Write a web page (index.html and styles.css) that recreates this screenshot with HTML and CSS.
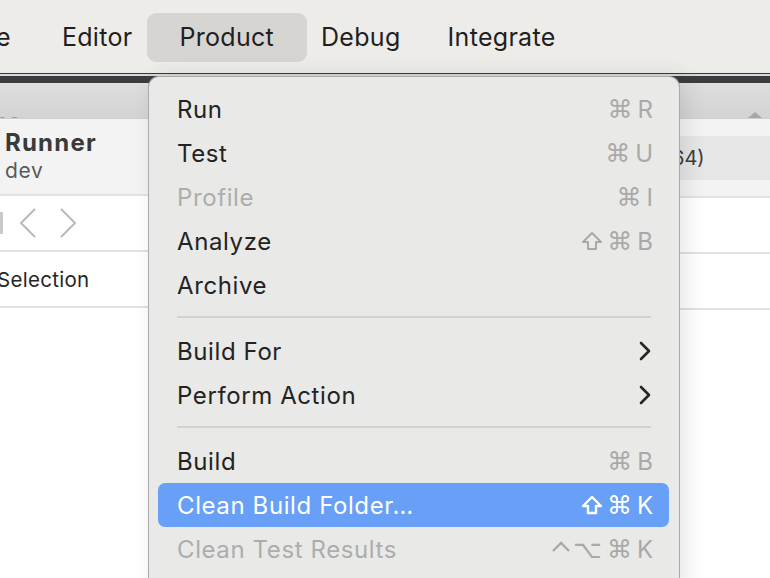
FILE: index.html
```html
<!DOCTYPE html>
<html>
<head>
<meta charset="utf-8">
<link rel="stylesheet" href="styles.css">
</head>
<body>
<div class="screen">
  <header class="menubar">
    <span class="mb-item mb-cut">e</span>
    <span class="mb-item">Editor</span>
    <span class="mb-item mb-active">Product</span>
    <span class="mb-item">Debug</span>
    <span class="mb-item">Integrate</span>
  </header>
  <div class="gap-line"></div>
  <div class="window">
    <div class="toolbar">
      <span class="tb-cut">no</span>
      <span class="tb-arrow"></span>
    </div>
    <div class="panes">
      <section class="left-pane">
        <div class="scheme">
          <div class="scheme-name">Runner</div>
          <div class="scheme-sub">dev</div>
        </div>
        <div class="nav-row">
          <span class="nav-bar"></span>
          <svg class="nav-chev" width="18" height="30" viewBox="0 0 18 30"><path d="M16 1 L2 15 L16 29" fill="none" stroke="#b9b9b9" stroke-width="2"/></svg>
          <svg class="nav-chev" width="18" height="30" viewBox="0 0 18 30"><path d="M2 1 L16 15 L2 29" fill="none" stroke="#b9b9b9" stroke-width="2"/></svg>
        </div>
        <div class="sel-row">Selection</div>
        <div class="blank"></div>
      </section>
      <section class="right-pane">
        <div class="dest-top"></div>
        <div class="dest">64)</div>
        <div class="dest-bot"></div>
        <div class="r-row"></div>
        <div class="r-row"></div>
        <div class="blank"></div>
      </section>
    </div>
  </div>

  <nav class="menu">
    <div class="mi"><span>Run</span><span class="sc"><span class="k">⌘</span>R</span></div>
    <div class="mi"><span>Test</span><span class="sc"><span class="k">⌘</span>U</span></div>
    <div class="mi dis"><span>Profile</span><span class="sc"><span class="k">⌘</span>I</span></div>
    <div class="mi"><span>Analyze</span><span class="sc"><svg class="shift" width="22" height="20" viewBox="0 0 22 20"><path d="M11 2 L20 11 L15 11 L15 18 L7 18 L7 11 L2 11 Z" fill="none" stroke="currentColor" stroke-width="2" stroke-linejoin="round"/></svg><span class="k">⌘</span>B</span></div>
    <div class="mi"><span>Archive</span></div>
    <div class="sep"></div>
    <div class="mi"><span>Build For</span><svg class="sub" width="12" height="20" viewBox="0 0 12 20"><path d="M2 2 L10 10 L2 18" fill="none" stroke="#262626" stroke-width="2.6" stroke-linecap="round" stroke-linejoin="round"/></svg></div>
    <div class="mi"><span>Perform Action</span><svg class="sub" width="12" height="20" viewBox="0 0 12 20"><path d="M2 2 L10 10 L2 18" fill="none" stroke="#262626" stroke-width="2.6" stroke-linecap="round" stroke-linejoin="round"/></svg></div>
    <div class="sep"></div>
    <div class="mi"><span>Build</span><span class="sc"><span class="k">⌘</span>B</span></div>
    <div class="mi hl"><span>Clean Build Folder…</span><span class="sc"><svg class="shift" width="22" height="20" viewBox="0 0 22 20"><path d="M11 2 L20 11 L15 11 L15 18 L7 18 L7 11 L2 11 Z" fill="none" stroke="currentColor" stroke-width="2.4" stroke-linejoin="round"/></svg><span class="k">⌘</span>K</span></div>
    <div class="mi dis"><span>Clean Test Results</span><span class="sc"><svg class="caret" width="20" height="20" viewBox="0 0 20 20"><path d="M2 12 L10 4 L18 12" fill="none" stroke="currentColor" stroke-width="2.4"/></svg><span class="k">⌥</span><span class="k">⌘</span>K</span></div>
  </nav>
</div>
</body>
</html>
```

FILE: styles.css
```css
html, body {
  margin: 0;
  padding: 0;
}
body {
  width: 770px;
  height: 578px;
  overflow: hidden;
  background: #ffffff;
  font-family: Inter, "Noto Sans", "DejaVu Sans", sans-serif;
}
.screen {
  position: relative;
  width: 770px;
  height: 578px;
  overflow: hidden;
}
.menubar {
  height: 74px;
  background: #eeece8;
  border-bottom: 1px solid #3a3a3a;
  display: flex;
  align-items: center;
  gap: 47px;
  font-size: 25px;
  letter-spacing: 0.3px;
  color: #1f1f1f;
  box-sizing: border-box;
}
.mb-item {
  height: 49px;
  display: flex;
  align-items: center;
  border-radius: 9px;
  margin-top: 1px;
}
.mb-cut {
  margin-left: -4px;
  margin-right: 4px;
}
.mb-active {
  background: #d7d5d1;
  padding: 0 33px 0 32px;
  margin-left: -32px;
  margin-right: -33px;
}
.gap-line {
  height: 2px;
  background: #d8d8d8;
}
.window {
  display: flex;
  flex-direction: column;
  height: 502px;
  border-top: 7px solid #3c3c3c;
}
.toolbar {
  height: 35px;
  background: linear-gradient(#dedede, #d3d3d3);
  position: relative;
  overflow: hidden;
  border-bottom: 1px solid #cfcfcf;
}
.tb-cut {
  position: absolute;
  left: -6px;
  top: 25px;
  font-size: 22px;
  font-weight: 700;
  color: #9c9c9c;
}
.tb-arrow {
  position: absolute;
  left: 748px;
  top: 29px;
  width: 0;
  height: 0;
  border-left: 7px solid transparent;
  border-right: 7px solid transparent;
  border-bottom: 6px solid #a8a8a8;
}
.panes {
  display: flex;
  flex: 1;
}
.left-pane {
  flex: 1;
  display: flex;
  flex-direction: column;
}
.scheme {
  height: 77px;
  background: #f3f3f3;
  border-bottom: 2px solid #e2e2e2;
  padding: 9px 0 0 5px;
  box-sizing: border-box;
}
.scheme-name {
  font-size: 24px;
  font-weight: 700;
  letter-spacing: 1.2px;
  color: #3a3a3a;
  line-height: 29px;
}
.scheme-sub {
  font-size: 21px;
  color: #5a5a5a;
  line-height: 28px;
  letter-spacing: 0.6px;
}
.nav-row {
  height: 54px;
  border-bottom: 2px solid #e2e2e2;
  display: flex;
  align-items: center;
  gap: 22px;
  background: #fff;
}
.nav-bar {
  width: 3px;
  height: 22px;
  background: #c9c9c9;
  margin-right: -6px;
}
.nav-chev {
  display: block;
}
.sel-row {
  height: 54px;
  border-bottom: 2px solid #e2e2e2;
  display: flex;
  align-items: center;
  font-size: 20.5px;
  letter-spacing: 0.3px;
  color: #262626;
  margin-left: -3px;
  background: #fff;
}
.blank {
  flex: 1;
  background: #fff;
}
.right-pane {
  width: 90px;
  display: flex;
  flex-direction: column;
}
.dest-top {
  height: 17px;
  background: #f3f3f3;
}
.dest {
  height: 44px;
  background: #e6e6e6;
  display: flex;
  align-items: center;
  font-size: 20px;
  color: #3c3c3c;
  text-indent: -8px;
}
.dest-bot {
  height: 16px;
  background: #f3f3f3;
  border-bottom: 2px solid #e2e2e2;
}
.r-row {
  height: 54px;
  border-bottom: 2px solid #e2e2e2;
  background: #fff;
}
.menu {
  position: absolute;
  left: 148px;
  top: 76px;
  width: 532px;
  height: 520px;
  background: #e9e9e7;
  border: 1px solid #a9a9a9;
  border-bottom: none;
  border-radius: 11px 11px 0 0;
  box-shadow: 6px 0 22px rgba(0, 0, 0, 0.10);
  padding: 10px 10px 0 9px;
  box-sizing: border-box;
  font-size: 24px;
  letter-spacing: 0.6px;
  color: #232323;
}
.mi {
  height: 44px;
  display: flex;
  align-items: center;
  justify-content: space-between;
  padding: 0 16px 0 19px;
  border-radius: 7px;
}
.mi.dis {
  color: #adadad;
}
.sc {
  color: #a9a9a9;
  display: flex;
  align-items: center;
  gap: 5px;
  letter-spacing: 0;
}
.k {
  font-family: "DejaVu Sans", sans-serif;
  font-size: 25px;
  line-height: 1;
}
.caret {
  display: block;
  margin-right: -3px;
}
.shift {
  display: block;
  margin-right: -1px;
}
.hl {
  background: #68a0f7;
  color: #ffffff;
}
.hl .sc {
  color: #ffffff;
}
.sub {
  display: block;
  margin-right: 2px;
}
.sep {
  height: 2px;
  background: #d2d2d0;
  margin: 9px 18px 11px 19px;
}
```
